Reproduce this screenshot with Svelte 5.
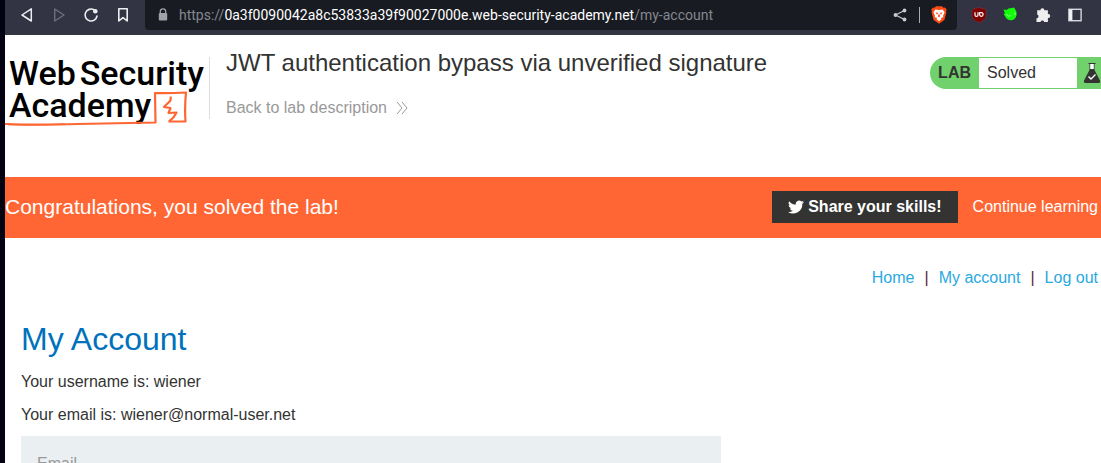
<script>
  let email = $state('');
  const links = ['Home', 'My account', 'Log out'];
</script>

<div class="window">
  <div class="browser">
    <nav class="toolbar" aria-label="Browser">
      <div class="controls">
        <button aria-label="Back">
          <svg width="16" height="16" viewBox="0 0 16 16"><path d="M12.3 1.8V14L3 8Z" fill="none" stroke="#eeeef2" stroke-width="1.5" stroke-linejoin="round" /></svg>
        </button>
        <button aria-label="Forward">
          <svg width="16" height="16" viewBox="0 0 16 16"><path d="M3.7 2V14L13 8Z" fill="none" stroke="#6d6f7d" stroke-width="1.4" stroke-linejoin="round" /></svg>
        </button>
        <button aria-label="Reload">
          <svg width="16" height="16" viewBox="0 0 16 16"><path d="M11 2.8A6 6 0 1 0 14 9" fill="none" stroke="#eeeef2" stroke-width="1.6" stroke-linecap="round" /><circle cx="12.3" cy="4.2" r="2.3" fill="#eeeef2" /></svg>
        </button>
        <button aria-label="Bookmark">
          <svg width="16" height="16" viewBox="0 0 16 16"><path d="M3.8 1.8H12.2V14L8 10.6 3.8 14Z" fill="none" stroke="#eeeef2" stroke-width="1.6" stroke-linejoin="round" /></svg>
        </button>
      </div>
      <div class="address">
        <svg class="lock" width="10" height="14" viewBox="0 0 10 14"><path d="M2.3 6V3.6a2.7 2.7 0 0 1 5.4 0V6" fill="none" stroke="#a0a2aa" stroke-width="1.3" /><rect x=".8" y="5" width="8.4" height="7.6" rx="1" fill="#a0a2aa" /></svg>
        <span class="url">https://<b>0a3f0090042a8c53833a39f90027000e.web-security-academy.net</b>/my-account</span>
        <button aria-label="Share">
          <svg width="14" height="14" viewBox="0 0 14 14"><path d="M11.5 2.5 2.5 7l9 4.5" fill="none" stroke="#c8c8cd" stroke-width="1.2" /><g fill="#c8c8cd"><circle cx="11.5" cy="2.5" r="1.9" /><circle cx="2.5" cy="7" r="1.9" /><circle cx="11.5" cy="11.5" r="1.9" /></g></svg>
        </button>
        <i class="rule"></i>
        <button aria-label="Shields">
          <svg width="16" height="18" viewBox="0 0 16 18"><path d="M5 .3h6l1.3 1.4 1.6-.2 1.8 2-.6 1.7.3 1.4-2 7.4L8 17.8 2.6 14 .6 6.600l.3-1.400-.6-1.700 1.800-2 1.600.2Z" fill="#fb4b12" /><path d="M4.400 3.400 8 4l3.600-.6 2 2.800-1.500 3.400.2 1.600L9.700 12l1 1.100L8 15.200l-2.700-2.100 1-1.100-2.600-.8.2-1.600L2.400 6.200Z" fill="#fff" /><path d="m4.500 6.300 2.600.7-1 1.700ZM11.500 6.300l-2.600.7 1 1.700ZM7.200 8.500h1.600L9 10.500 8 11.200l-1-.7Z" fill="#fb4b12" /></svg>
        </button>
      </div>
      <div class="extensions">
        <button aria-label="uBlock Origin">
          <svg width="16" height="16" viewBox="0 0 16 16"><path d="M8 .5 15 2.300V8.500C15 11.600 11.500 14.300 8 15.600 4.500 14.300 1 11.600 1 8.500V2.300Z" fill="#800000" stroke="#673a49" stroke-width=".7" /><path d="M4 5.300v2.600q0 1.500 1.500 1.500T7 7.900V5.300M8.600 5.300v2.300q0 1.800 1.700 1.800t1.800-1.900-1.800-1.900H8.600" fill="none" stroke="#fff" stroke-width="1.200" /></svg>
        </button>
        <button aria-label="Proxy">
          <svg width="16" height="16" viewBox="0 0 16 16"><path d="m.5 2.500 3 .6Q5.500.8 9 1l2-.6 1.300 2.200q2.200 2.600 1.200 6Q12 13.300 8 13.300 4 13.300 2.300 9.500L.8 7.500l1-1.500Z" fill="#12fb08" /><path d="m3.500 7.500 2 1.500 2-.4M11.300 5.500l1.300 1-1.200 1.500" fill="none" stroke="#bfffb9" stroke-width=".8" /></svg>
        </button>
        <button aria-label="Extensions">
          <svg width="16" height="16" viewBox="0 0 16 16"><path d="M2.200 3.300h3.200a2 2 0 0 1 4 0h3.500v3.800h.4a1.900 1.900 0 0 1 0 3.800h-.4v4H9.200a1.900 1.900 0 0 0-3.700 0H1.500v-3.700a1.900 1.900 0 0 0 .7-3.700Z" fill="#eeeeee" /></svg>
        </button>
        <button aria-label="Sidebar">
          <svg width="16" height="16" viewBox="0 0 16 16"><rect x="1.900" y="2.300" width="12.200" height="11.400" fill="none" stroke="#d8d8df" stroke-width="1.400" /><path d="M2 2.500h3.400v11H2Z" fill="#eeeef2" /></svg>
        </button>
      </div>
    </nav>

    <header>
      <a class="logo" href="#academy" aria-label="Web Security Academy">
        <span class="words"><span>Web</span><span>Security</span></span>
        <span class="words">Academy</span>
        <svg class="mark" width="200" height="38" viewBox="0 0 200 38"><g fill="none" stroke="#ff6633" stroke-width="2.200" stroke-linejoin="round"><path d="M0 33Q35 34 73 33T150.500 31.500L150 2Q163 2.500 181 1.500Q179.500 16 180.500 30.500H163.500" /><path d="M3 33.500Q30 34.500 60 33" stroke-width="1.500" /><path d="M165.500 5.500Q166.500 10 163 12L159 16 165.500 17 163.500 22 171.500 21.500Q169 27 164 30.500" /></g></svg>
      </a>
      <div class="title">
        <h2>JWT authentication bypass via unverified signature</h2>
        <a class="back" href="#description">Back to lab description
          <svg width="12" height="12" viewBox="0 0 12 12"><path d="m1 0 5 6-5 6M6 0l5 6-5 6" fill="none" stroke="#999" stroke-width="1" /></svg>
        </a>
      </div>
      <div class="status">
        <strong>LAB</strong><span>Solved</span>
        <svg width="18" height="22" viewBox="0 0 18 22"><path d="M7 2h4v6H7Z" fill="#fff" /><path d="M5.500 1h7v1h-7ZM6.500 2h.7v5h3.600V2h.7v6L17 18.500Q17.500 21 15.500 21h-13Q.5 21 1 18.500L6.500 8Z" fill="#333332" /><path d="m5.500 14.500 2.500 2.500 4.500-4.500" fill="none" stroke="#fff" stroke-width="1.400" /></svg>
      </div>
    </header>

    <section class="banner">
      <h4>Congratulations, you solved the lab!</h4>
      <button class="share">
        <svg width="16" height="16" viewBox="0 0 24 24"><path fill="#fff" d="M24 4.600a10 10 0 0 1-2.800.8 5 5 0 0 0 2.100-2.700 10 10 0 0 1-3.100 1.200 4.900 4.900 0 0 0-8.400 4.500A14 14 0 0 1 1.700 3.200a4.900 4.900 0 0 0 1.500 6.500 5 5 0 0 1-2.200-.6 4.900 4.900 0 0 0 3.900 4.900 5 5 0 0 1-2.200.1 4.900 4.900 0 0 0 4.600 3.400A9.900 9.900 0 0 1 0 19.500 14 14 0 0 0 21.500 7.100 10 10 0 0 0 24 4.600Z" /></svg>
        Share your skills!
      </button>
      <a href="#learning">Continue learning</a>
    </section>

    <main>
      <nav class="links" aria-label="Account">
        {#each links as label, i}
          {#if i > 0}<span>|</span>{/if}
          <a href="#{label}">{label}</a>
        {/each}
      </nav>
      <div class="content">
        <h1>My Account</h1>
        <p>Your username is: wiener</p>
        <p>Your email is: wiener@normal-user.net</p>
        <form>
          <label for="email">Email</label>
          <input id="email" type="email" bind:value={email} />
        </form>
      </div>
    </main>
  </div>
</div>

<style>
  :global(body) { margin: 0; background: #fff; }
  .window {
    box-sizing: border-box;
    height: 100vh;
    overflow: hidden;
    border-left: 5px solid #020212;
    font: 16px/20px "Liberation Sans", Arial, sans-serif;
    color: #333332;
  }
  a { text-decoration: none; }
  button { display: flex; align-items: center; padding: 0; border: 0; background: none; }
  svg { display: block; flex: none; }
  h1, h2, h4, p { margin: 0; font-weight: 400; }

  .toolbar { display: flex; align-items: flex-start; height: 35px; background: #323443; }
  .controls { display: flex; gap: 16px; padding: 7px 14px; }
  .address {
    display: flex;
    align-items: center;
    flex: 1;
    height: 30px;
    padding: 0 10px 0 13px;
    border-radius: 0 0 4px 4px;
    background: #181b22;
  }
  .lock { margin-right: 11px; }
  .url { flex: 1; font: 14px/20px Roboto, sans-serif; color: #858890; white-space: nowrap; }
  .url b { font-weight: 400; color: #fff; }
  .rule { width: 1px; height: 16px; margin: 0 11px 0 12px; background: #aaaab0; }
  .extensions { display: flex; gap: 16px; padding: 7px 18px 7px 14px; }

  header { display: flex; align-items: flex-start; height: 142px; }
  .logo {
    position: relative;
    width: 204px;
    height: 62px;
    margin-top: 22px;
    border-right: 1px solid #ddd;
    font: 500 34px/32px Roboto, sans-serif;
    color: #000;
  }
  .words { display: flex; gap: 4px; padding-left: 4px; white-space: nowrap; }
  .mark { position: absolute; left: 0; top: 34px; }
  .title { flex: 1; padding: 13px 16px; }
  h2 { font-size: 24px; line-height: 30px; }
  .back { display: flex; align-items: center; gap: 9px; margin-top: 20px; color: #999; }
  .status {
    display: flex;
    align-items: center;
    box-sizing: border-box;
    height: 32px;
    margin-top: 22px;
    padding-left: 8px;
    border-radius: 16px 0 0 16px;
    background: #70d16d;
  }
  .status span { box-sizing: border-box; width: 98px; margin: 0 6px 0 8px; padding: 5px 8px; background: #fff; }

  .banner { display: flex; align-items: center; box-sizing: border-box; height: 61px; padding: 0 3px 2px 0; background: #ff6633; color: #fff; }
  h4 { flex: 1; font-size: 21px; line-height: 28px; }
  .banner a { color: #fff; }
  .share { gap: 4px; height: 32px; margin-right: 15px; padding: 0 16px; background: #333332; color: #fff; font: bold 16px/20px "Liberation Sans", Arial, sans-serif; }

  .links { display: flex; justify-content: flex-end; gap: 10px; padding: 30px 3px 0; }
  .links a { color: #29a9e1; }
  .links span { color: #5c2530; }
  .content { padding: 31px 16px 0; }
  h1 { font-size: 32px; line-height: 40px; color: #0071bc; }
  p { margin-top: 13px; }
  form { position: relative; max-width: 700px; margin-top: 11px; }
  label { position: absolute; left: 16px; top: 18px; color: #999; }
  input { display: block; box-sizing: border-box; width: 100%; height: 56px; padding: 16px; border: 0; background: #eaeff2; font: inherit; }
</style>
